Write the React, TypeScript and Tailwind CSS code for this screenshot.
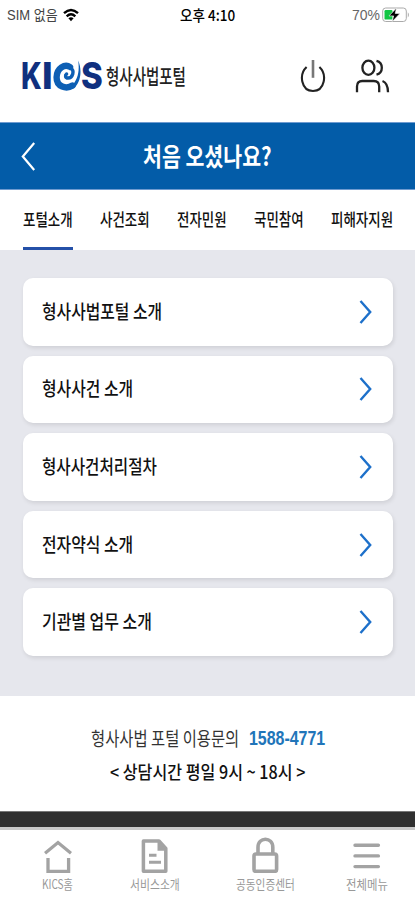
import React, { useLayoutEffect, useRef, useState } from "react";

const KR = "font-['Noto_Sans_CJK_KR','Noto_Sans',sans-serif]";
const ARIAL_KR = "font-['Liberation_Sans','Noto_Sans_CJK_KR',sans-serif]";

/** Condensed single-line text that fills exactly `width` pixels. */
function Fit({ width, className = "", children }: { width: number; className?: string; children: React.ReactNode }) {
  const ref = useRef<HTMLSpanElement>(null);
  const [scale, setScale] = useState(1);
  useLayoutEffect(() => {
    if (ref.current) setScale(width / ref.current.offsetWidth);
  }, [width]);
  return (
    <span className="block shrink-0" style={{ width }}>
      <span
        ref={ref}
        className={"inline-block origin-left whitespace-nowrap align-top " + className}
        style={{ transform: `scaleX(${scale})` }}
      >
        {children}
      </span>
    </span>
  );
}

const tabs = [
  { label: "포털소개", w: 50, active: true },
  { label: "사건조회", w: 50 },
  { label: "전자민원", w: 50 },
  { label: "국민참여", w: 50 },
  { label: "피해자지원", w: 62 },
];

const items = [
  { label: "형사사법포털 소개", w: 120 },
  { label: "형사사건 소개", w: 91 },
  { label: "형사사건처리절차", w: 115 },
  { label: "전자약식 소개", w: 91 },
  { label: "기관별 업무 소개", w: 110 },
];

function StatusBar() {
  return (
    <div className="flex h-[29px] items-center pl-[7px] pr-[5px] text-black">
      <Fit width={51} className="font-['Liberation_Sans','Noto_Sans_CJK_KR',sans-serif] text-[14px] leading-[28px] text-[#444]">SIM 없음</Fit>
      <svg className="ml-[5px] h-[14px] w-4" viewBox="0 0 16 14" fill="none" stroke="#000" strokeWidth="2.4">
        <path d="M1 5.2Q8-1.3 15 5.2" />
        <path d="M3.7 8.3Q8 4.3 12.3 8.3" />
        <path d="M5.4 10.3Q8 8.1 10.6 10.3L8 13.3Z" fill="#000" stroke="none" />
      </svg>
      <div className="ml-[101px]">
        <Fit width={55} className="text-[15px] font-medium leading-[27px]">오후 4:10</Fit>
      </div>
      <div className="ml-auto">
        <Fit width={28} className="font-['Liberation_Sans',sans-serif] text-[15px] leading-[28px] text-[#666]">70%</Fit>
      </div>
      <svg className="ml-[2px] h-4 w-7" viewBox="0 0 28 16">
        <rect x=".7" y="1" width="23.6" height="13.5" rx="3" fill="#fff" stroke="#aaa" />
        <path d="M25.8 5.2Q28 7.8 25.8 10.4Z" fill="#aaa" />
        <rect x="2.5" y="3" width="8" height="9.6" rx="1.2" fill="#12c644" />
        <path d="M14.5 1L7 8.9H11.6L10.3 14.5L18 6.4H13.2Z" fill="#000" stroke="#fff" strokeWidth=".6" />
      </svg>
    </div>
  );
}

function Header() {
  return (
    <header className="flex h-[93px] items-center pl-[21px] pr-[25px]">
      <div className="flex h-10 items-center pt-px font-['Inter','Liberation_Sans',sans-serif] text-[37.5px] font-extrabold leading-10 text-[#10307f]">
        <Fit width={21}>K</Fit>
        <Fit width={11}>I</Fit>
        <svg className="-ml-px mr-0 h-[34px] w-[29px]" viewBox="0 0 29 34" fill="none" strokeLinecap="round">
          <path d="M18 8C13 4.5 4.8 9 4.6 18.3C4.4 28 14.5 30.5 20.5 26.5" stroke="#0d5fb4" strokeWidth="6.4" />
          <path d="M18 8C23.5 12 20.5 19 16 19C13.2 19 12.8 16.2 14.6 15" stroke="#0d5fb4" strokeWidth="3.4" />
          <path d="M18 28.5C26 21.5 27.7 12.5 26.2 1.5C30.4 11 29 25 20.5 30Z" fill="#0d5fb4" />
        </svg>
        <Fit width={22}>S</Fit>
      </div>
      <div className="ml-[3px]">
        <Fit width={80} className="text-[21px] font-medium leading-[31px] text-[#222]">형사사법포털</Fit>
      </div>
      <svg className="ml-auto h-[34px] w-7" viewBox="0 0 28 34" fill="none" stroke="#222" strokeWidth="2.1">
        <path d="M15 1V18.8" stroke="#777" strokeWidth="2.6" />
        <path d="M8.6 8C.6 15.5 3.2 32 15 32S29.4 15.5 21.4 8" />
      </svg>
      <svg className="ml-7 h-[34px] w-9" viewBox="0 0 36 34" fill="none" stroke="#222" strokeWidth="2.3">
        <ellipse cx="14.4" cy="8.8" rx="6" ry="7.1" />
        <path d="M3 33.3V27.5C3 24 5 22 8.3 22H19.7C23 22 25.2 24 25.2 27.5V33.3" />
        <path d="M22.5 1.9C29.6 3.8 29.6 13.8 22.5 15.7M28.5 22C32.5 23.5 34 26.5 34 33.3" />
      </svg>
    </header>
  );
}

function HomeIcon() {
  return (
    <svg className="h-9 w-7" viewBox="0 0 28 36" fill="none" stroke="#a3a3a3" strokeWidth="3.3">
      <path d="M1 16.3L14 5.6L27 16.3M4 21V34.5H24.6V21" />
    </svg>
  );
}
function DocIcon() {
  return (
    <svg className="h-9 w-7" viewBox="0 0 28 36" fill="none" stroke="#a3a3a3" strokeWidth="3.5">
      <path d="M2.4 4H18L24.8 11.5V34.2H2.4Z" strokeLinejoin="round" />
      <path d="M16.5 3V13.8H26Z" fill="#a3a3a3" stroke="none" />
      <path d="M8 18.3H15.5M8 25.3H20" strokeWidth="3" />
    </svg>
  );
}
function LockIcon() {
  return (
    <svg className="h-9 w-7" viewBox="0 0 28 36" fill="none" stroke="#a3a3a3" strokeWidth="3.6">
      <rect x="2" y="17" width="22.6" height="17.4" rx="2" />
      <path d="M6 16.5V10.5C6-.6 20.8-.6 20.8 10.5V16.5" />
    </svg>
  );
}
function MenuIcon() {
  return (
    <svg className="h-9 w-7" viewBox="0 0 28 36" fill="none" stroke="#a3a3a3" strokeWidth="3.4" strokeLinecap="round">
      <path d="M2 8.2H25.4M2 18.9H25.4M2 29.6H25.4" />
    </svg>
  );
}

const nav = [
  { label: "KICS홈", w: 31, icon: <HomeIcon />, col: "w-[115px]" },
  { label: "서비스소개", w: 50, icon: <DocIcon />, col: "w-[79px]" },
  { label: "공동인증센터", w: 59, icon: <LockIcon />, col: "w-[143px]" },
  { label: "전체메뉴", w: 42, icon: <MenuIcon />, col: "w-[59px]" },
];

export default function App() {
  return (
    <div className={"flex h-[900px] w-[415px] flex-col overflow-hidden bg-white " + KR}>
      <StatusBar />
      <Header />
      <div className="flex h-[68px] shrink-0 items-center border-y border-[#6f9bd0] bg-[#035ca8] pl-[21px]">
        <svg className="h-[29px] w-[15px]" viewBox="0 0 15 29" fill="none" stroke="#fff" strokeWidth="2.2">
          <path d="M13.2 1L1.8 14.5L13.2 28" />
        </svg>
        <div className="ml-[107px] pb-[2px]">
          <Fit width={129} className="text-[25px] font-bold leading-[60px] text-white">처음 오셨나요?</Fit>
        </div>
      </div>
      <nav className="flex h-[60px] shrink-0 justify-between pl-[22.5px] pr-[22px]">
        {tabs.map((t) => (
          <div key={t.label} className={"h-[60px] " + (t.active ? "border-b-[3px] border-[#2450a8]" : "")}>
            <Fit width={t.w} className="text-[17px] font-medium leading-[57px] text-[#111]">{t.label}</Fit>
          </div>
        ))}
      </nav>
      <main className="flex h-[446px] shrink-0 flex-col gap-[10.1px] bg-[#e6e7ed] pl-[23px] pr-[22px] pt-7">
        {items.map((t) => (
          <div key={t.label} className="flex h-[67.5px] shrink-0 items-center justify-between rounded-[10px] bg-white pl-[19px] pr-[21px] shadow-[1px_2px_4px_rgba(0,0,0,0.10)]">
            <Fit width={t.w} className="pb-[2px] text-[19px] font-medium leading-[64px] text-[#111]">{t.label}</Fit>
            <svg className="h-6 w-[13px]" viewBox="0 0 13 24" fill="none" stroke="#1d70ca" strokeWidth="2.4">
              <path d="M1.5 1L11.2 12L1.5 23" />
            </svg>
          </div>
        ))}
      </main>
      <section className="flex h-[115px] shrink-0 flex-col items-center pt-[26px]">
        <div className="flex h-8 items-center gap-[10px]">
          <Fit width={148} className="text-[19px] leading-8 text-[#333]">형사사법 포털 이용문의</Fit>
          <Fit width={76} className={"text-[19.5px] font-bold leading-8 text-[#2175b9] " + ARIAL_KR}>1588-4771</Fit>
        </div>
        <Fit width={195} className="text-[18.5px] font-medium leading-[34px] text-[#111]">&lt; 상담시간 평일 9시 ~ 18시 &gt;</Fit>
      </section>
      <div className="h-[19px] shrink-0 border-b-[3px] border-t border-b-[#c9c9c9] border-t-[#777] bg-[#303030]" />
      <footer className="flex h-[70px] shrink-0 pt-[7px]">
        {nav.map((n) => (
          <div key={n.label} className={"flex shrink-0 flex-col items-center " + n.col}>
            {n.icon}
            <Fit width={n.w} className="text-[13px] leading-[21px] text-[#999]">{n.label}</Fit>
          </div>
        ))}
      </footer>
    </div>
  );
}
